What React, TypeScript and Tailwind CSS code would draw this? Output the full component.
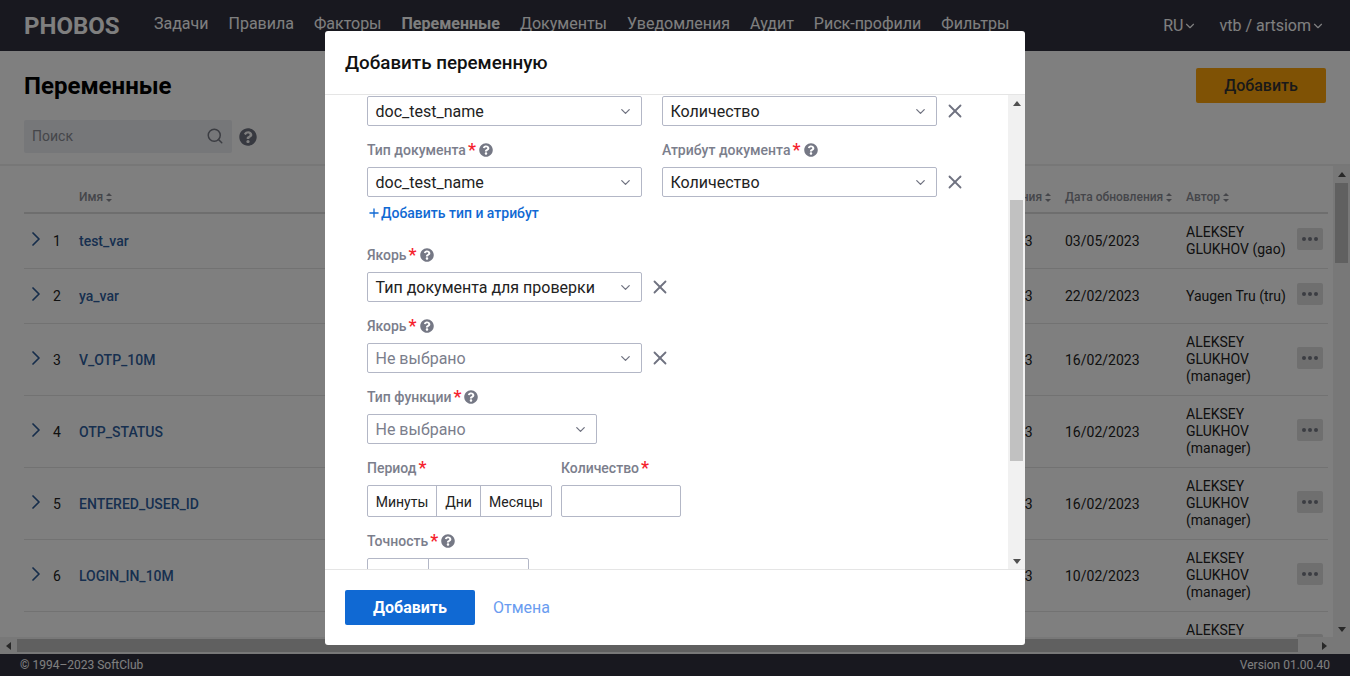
import { ChevronDown, ChevronRight, Plus, Search, X } from 'lucide-react'
import { FaQuestionCircle } from 'react-icons/fa'

const NAV = ['Задачи', 'Правила', 'Факторы', 'Переменные', 'Документы', 'Уведомления', 'Аудит', 'Риск-профили', 'Фильтры']

const ROWS = [
  { name: 'test_var', created: '03/05/2023', updated: '03/05/2023', author: 'ALEKSEY GLUKHOV (gao)', h: 'h-[55px]' },
  { name: 'ya_var', created: '22/02/2023', updated: '22/02/2023', author: 'Yaugen Tru (tru)', h: 'h-[55px]' },
  { name: 'V_OTP_10M', created: '16/02/2023', updated: '16/02/2023', author: 'ALEKSEY GLUKHOV (manager)', h: 'h-[72px]' },
  { name: 'OTP_STATUS', created: '16/02/2023', updated: '16/02/2023', author: 'ALEKSEY GLUKHOV (manager)', h: 'h-[72px]' },
  { name: 'ENTERED_USER_ID', created: '16/02/2023', updated: '16/02/2023', author: 'ALEKSEY GLUKHOV (manager)', h: 'h-[72px]' },
  { name: 'LOGIN_IN_10M', created: '10/02/2023', updated: '10/02/2023', author: 'ALEKSEY GLUKHOV (manager)', h: 'h-[72px]' },
]

const GRID = 'grid grid-cols-[29px_26px_1fr_107px_121px_111px_31px]'

function SortIcon() {
  return (
    <svg width="6" height="9" viewBox="0 0 6 9" className="ml-[3px] inline-block" fill="currentColor">
      <path d="M3 0 6 3H0z" />
      <path d="M3 9 0 6h6z" />
    </svg>
  )
}

function Arrow({ dir }: { dir: 'up' | 'down' | 'left' | 'right' }) {
  const paths = { up: 'M4 1 8 6H0z', down: 'M4 7 0 2h8z', left: 'M1 4 6 0v8z', right: 'M7 4 2 8V0z' }
  return (
    <svg width="8" height="8" viewBox="0 0 8 8" fill="#505050">
      <path d={paths[dir]} />
    </svg>
  )
}

function Label({ text, help = true }: { text: string; help?: boolean }) {
  return (
    <div className="flex h-[18px] items-center text-sm font-medium leading-[18px] text-[#7b7e8c]">
      <span>{text}</span>
      <span className="ml-[2px] text-[18px] leading-[18px] text-[#f5222d]">*</span>
      {help && <FaQuestionCircle className="ml-[3px] text-[14px] text-[#757885]" />}
    </div>
  )
}

function Select({ value, width, placeholder }: { value: string; width: string; placeholder?: boolean }) {
  return (
    <div className={`flex h-[30px] items-center justify-between rounded-[2px] border border-[#b3b7c6] pl-[8px] pr-[8px] text-base ${width} ${placeholder ? 'text-[#7b7e8c]' : 'text-[#222222]'}`}>
      <span className="-ml-[0.5px] pt-px">{value}</span>
      <ChevronDown size={15} strokeWidth={2} className="text-[#6f7280]" />
    </div>
  )
}

function Remove() {
  return <X size={22} strokeWidth={2} className="ml-[7px] text-[#6f7280]" />
}

function Segment({ text, width, first, last }: { text?: string; width: string; first?: boolean; last?: boolean }) {
  return (
    <div className={`flex h-[32px] items-center justify-center border border-[#b3b7c6] pt-px text-sm text-[#222222] ${width} ${first ? 'rounded-l-[2px]' : '-ml-px'} ${last ? 'rounded-r-[2px]' : ''}`}>
      {text}
    </div>
  )
}

function VariablesPage() {
  return (
    <div className="flex min-h-0 flex-1 flex-col bg-white">
      {/* Title and search */}
      <div className="h-[115px] shrink-0 border-b-2 border-[#eeeeee] pl-6 pr-6 pt-[17px]">
        <div className="flex h-[35px] items-center justify-between">
          <h1 className="text-2xl font-bold text-black">Переменные</h1>
          <button className="h-[35px] w-[130px] rounded-[2px] bg-[#ffa40a] text-base font-medium text-[#333333]">Добавить</button>
        </div>
        <div className="mt-[17px] flex items-center">
          <div className="flex h-[33px] w-[208px] items-center justify-between rounded-[2px] bg-[#eceef3] pb-px pl-2 pr-[8px] text-sm text-[#8a8c94]">
            <span>Поиск</span>
            <Search size={18} className="text-[#777a85]" />
          </div>
          <FaQuestionCircle className="ml-[7px] text-[18px] text-[#6f7280]" />
        </div>
      </div>

      {/* Table */}
      <div className="flex min-h-0 flex-1">
        <div className="min-w-0 flex-1 overflow-hidden pl-6 pr-[5px]">
          <div className={`${GRID} h-[48px] items-end border-b-2 border-[#dddddd] pb-[7px] text-xs font-medium text-[#8a8c94]`}>
            <span />
            <span />
            <span>Имя<SortIcon /></span>
            <span>Дата создания<SortIcon /></span>
            <span>Дата обновления<SortIcon /></span>
            <span>Автор<SortIcon /></span>
            <span />
          </div>
          {ROWS.map((row, i) => (
            <div key={row.name} className={`${GRID} ${row.h} items-center border-b border-[#e4e4e4] text-sm text-[#222222]`}>
              <ChevronRight size={24} strokeWidth={1.75} className="-ml-[0.5px] -mt-[4px] text-[#2c5a96]" />
              <span>{i + 1}</span>
              <span className="font-medium text-[#2f5f9f]">{row.name}</span>
              <span>{row.created}</span>
              <span>{row.updated}</span>
              <span className="pr-[6px] leading-[17px]">{row.author}</span>
              <div className="-mt-[4px] flex h-[22px] w-[26px] items-center justify-center gap-[2px] rounded-[2px] bg-[#dedede]">
                <i className="h-[4px] w-[4px] rounded-full bg-[#777a85]" />
                <i className="h-[4px] w-[4px] rounded-full bg-[#777a85]" />
                <i className="h-[4px] w-[4px] rounded-full bg-[#777a85]" />
              </div>
            </div>
          ))}
          {/* Next row, only its top shows above the scrollbar */}
          <div className={`${GRID} text-sm text-[#222222]`}>
            <span />
            <span />
            <span />
            <span />
            <span />
            <span className="pt-[10px] leading-[17px]">ALEKSEY</span>
            <div className="mt-[22px] h-[22px] w-[26px] rounded-[2px] bg-[#dedede]" />
          </div>
        </div>
        <div className="flex w-[17px] shrink-0 flex-col items-center bg-[#f1f1f1]">
          <div className="flex h-[17px] items-center justify-center"><Arrow dir="up" /></div>
          <div className="h-[80px] w-[13px] shrink-0 bg-[#c1c1c1]" />
          <div className="flex-1" />
          <div className="flex h-[17px] items-center justify-center"><Arrow dir="down" /></div>
        </div>
      </div>

      {/* Horizontal scrollbar */}
      <div className="flex h-[17px] shrink-0 items-center bg-[#f1f1f1]">
        <div className="flex w-[17px] justify-center"><Arrow dir="left" /></div>
        <div className="h-[13px] w-[1281px] bg-[#c1c1c1]" />
        <div className="flex w-[52px] justify-center"><Arrow dir="right" /></div>
      </div>
    </div>
  )
}

function AddVariableModal() {
  return (
    <div className="absolute left-[325px] top-[31px] flex h-[614px] w-[700px] flex-col overflow-hidden rounded-[3px] bg-white">
      <div className="flex h-[64px] shrink-0 items-center border-b border-[#e5e5e5] pl-5 pt-[2px] text-[18.8px] font-medium text-[#111111]">
        Добавить переменную
      </div>

      <div className="flex min-h-0 flex-1">
        <div className="min-w-0 flex-1 overflow-hidden pl-[42px] pt-px">
          <div className="flex items-center">
            <Select value="doc_test_name" width="w-[275px]" />
            <div className="ml-5"><Select value="Количество" width="w-[275px]" /></div>
            <Remove />
          </div>

          <div className="mt-[15px] flex">
            <div className="w-[295px]"><Label text="Тип документа" /></div>
            <Label text="Атрибут документа" />
          </div>
          <div className="mt-2 flex items-center">
            <Select value="doc_test_name" width="w-[275px]" />
            <div className="ml-5"><Select value="Количество" width="w-[275px]" /></div>
            <Remove />
          </div>
          <div className="mt-[7px] flex h-[18px] items-center text-sm font-medium leading-[18px] text-[#1069d3]">
            <Plus size={14} strokeWidth={2.25} />
            <span>Добавить тип и атрибут</span>
          </div>

          <div className="mt-[24px]"><Label text="Якорь" /></div>
          <div className="mt-2 flex items-center">
            <Select value="Тип документа для проверки" width="w-[275px]" />
            <Remove />
          </div>

          <div className="mt-[15px]"><Label text="Якорь" /></div>
          <div className="mt-2 flex items-center">
            <Select value="Не выбрано" width="w-[275px]" placeholder />
            <Remove />
          </div>

          <div className="mt-[15px]"><Label text="Тип функции" /></div>
          <div className="mt-2"><Select value="Не выбрано" width="w-[230px]" placeholder /></div>

          <div className="mt-[15px] flex">
            <div className="w-[194px]"><Label text="Период" help={false} /></div>
            <Label text="Количество" help={false} />
          </div>
          <div className="mt-2 flex">
            <div className="flex w-[194px]">
              <Segment text="Минуты" width="w-[70px]" first />
              <Segment text="Дни" width="w-[45px]" />
              <Segment text="Месяцы" width="w-[72px]" last />
            </div>
            <div className="h-[32px] w-[120px] rounded-[2px] border border-[#b3b7c6]" />
          </div>

          <div className="mt-[15px]"><Label text="Точность" /></div>
          <div className="mt-2 flex">
            <Segment width="w-[62px]" first />
            <Segment width="w-[101px]" last />
          </div>
        </div>

        <div className="flex w-[17px] shrink-0 flex-col items-center bg-[#f1f1f1]">
          <div className="flex h-[17px] items-center justify-center"><Arrow dir="up" /></div>
          <div className="h-[88px] shrink-0" />
          <div className="h-[261px] w-[13px] shrink-0 bg-[#c1c1c1]" />
          <div className="flex-1" />
          <div className="flex h-[17px] items-center justify-center"><Arrow dir="down" /></div>
        </div>
      </div>

      <div className="flex h-[76px] shrink-0 items-center border-t border-[#e5e5e5] pl-5">
        <button className="h-[35px] w-[130px] rounded-[2px] bg-[#1069d3] text-base font-bold text-white">Добавить</button>
        <span className="ml-[18px] text-base text-[#6a9cf0]">Отмена</span>
      </div>
    </div>
  )
}

export default function App() {
  return (
    <div className="relative flex h-[676px] w-[1350px] flex-col overflow-hidden font-['Roboto',sans-serif]">
      <header className="flex h-[51px] shrink-0 items-center bg-[#30303f] pl-6 pr-[25px] text-base text-[#ffffff]">
        <span className="w-[130px] text-2xl font-bold">PHOBOS</span>
        <nav className="-mt-[3px] flex gap-5">
          {NAV.map((item) => (
            <span key={item} className={item === 'Переменные' ? 'font-bold' : ''}>{item}</span>
          ))}
        </nav>
        <div className="ml-auto flex items-center">
          <span>RU</span>
          <ChevronDown size={14} strokeWidth={2} />
          <span className="ml-[22px]">vtb / artsiom</span>
          <ChevronDown size={14} strokeWidth={2} />
        </div>
      </header>

      <VariablesPage />

      <footer className="flex h-[22px] shrink-0 items-center justify-between bg-[#30303f] pl-5 pr-5 text-xs text-white">
        <span>© 1994–2023 SoftClub</span>
        <span>Version 01.00.40</span>
      </footer>

      <div className="absolute inset-0 bg-black/50" />
      <AddVariableModal />
    </div>
  )
}
